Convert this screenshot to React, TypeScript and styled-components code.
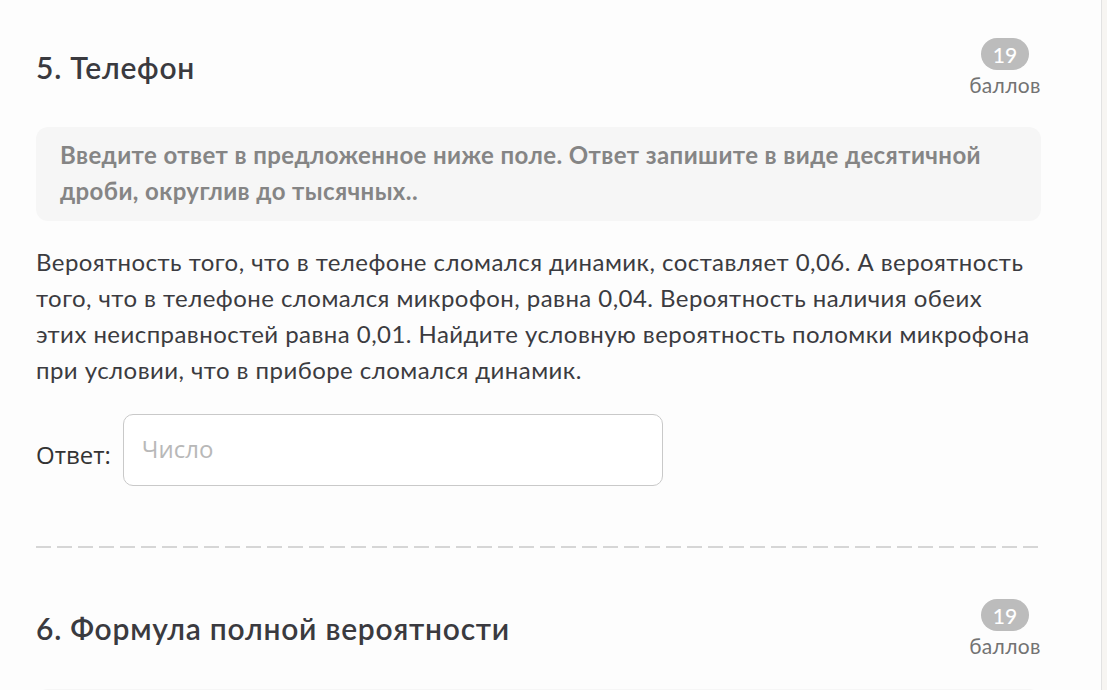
import React from "react";
import styled, { createGlobalStyle } from "styled-components";

const Global = createGlobalStyle`
  html, body { margin: 0; padding: 0; background: #fdfdfd; }
  body { font-family: Lato, "Open Sans", "Noto Sans", sans-serif; color: #3b3b40; }
  * { box-sizing: border-box; }
`;

const Shell = styled.div`
  display: flex;
  width: 1107px;
  height: 690px;
  overflow: hidden;
`;

const Main = styled.main`
  flex: 1;
  padding: 38px 60px 0 36px;
  background: #fdfdfd;
`;

const Rail = styled.div`
  width: 6px;
  border-left: 1px solid #e2e2e2;
  background: #f7f5f2;
`;

const Section = styled.section`
  display: flex;
  flex-direction: column;
`;

const Header = styled.div`
  display: flex;
  justify-content: space-between;
  align-items: center;
`;

const Title = styled.h2`
  margin: 0 0 4px;
  font-size: 30px;
  font-weight: 600;
  color: #3a3a3f;
  letter-spacing: 0.75px;
`;

const Score = styled.div`
  display: flex;
  flex-direction: column;
  align-items: center;
  width: 72px;
`;

const Badge = styled.span`
  display: inline-flex;
  align-items: center;
  justify-content: center;
  min-width: 48px;
  height: 32px;
  padding: 0 10px;
  border-radius: 16px;
  background: #bcbcbc;
  color: #fff;
  font-size: 21px;
  font-weight: 500;
`;

const Unit = styled.span`
  font-size: 21px;
  color: #737373;
  line-height: 30px;
  letter-spacing: 0.3px;
`;

const Hint = styled.div<{ $clipped?: boolean }>`
  margin-top: ${(p) => (p.$clipped ? "28px" : "27px")};
  padding: 10px 24px 12px;
  background: #f6f6f6;
  border-radius: 12px;
  color: #858585;
  font-size: 24px;
  font-weight: 700;
  line-height: 36px;
  letter-spacing: 0.4px;
`;

const Body = styled.p`
  margin: 23px 0 0;
  font-size: 24px;
  line-height: 36px;
  color: #3b3b40;
  letter-spacing: 0.45px;
  white-space: nowrap;
`;

const AnswerRow = styled.div`
  display: flex;
  align-items: center;
  gap: 12px;
  margin-top: 26px;
`;

const Label = styled.span`
  font-family: "Open Sans", "Noto Sans", sans-serif;
  font-size: 24px;
  color: #333;
  margin-top: 8px;
`;

const Input = styled.input`
  width: 540px;
  height: 72px;
  border: 1px solid #c9c9c9;
  border-radius: 10px;
  padding: 0 18px 4px;
  font-family: "Open Sans", "Noto Sans", sans-serif;
  font-size: 24px;
  color: #333;
  background: #fff;
  outline: none;
  &::placeholder { color: #b8b8b8; }
`;

const Divider = styled.hr`
  margin: 60px 0 0;
  height: 2px;
  border: 0;
  background: repeating-linear-gradient(
    to right,
    #d6d6d6 0 15px,
    transparent 15px 21px
  );
`;

const NextSection = styled(Section)`
  margin-top: 51px;
`;

export default function App() {
  return (
    <>
      <Global />
      <Shell>
        <Main>
          <Section>
            <Header>
              <Title>5. Телефон</Title>
              <Score>
                <Badge>19</Badge>
                <Unit>баллов</Unit>
              </Score>
            </Header>
            <Hint>
              Введите ответ в предложенное ниже поле. Ответ запишите в виде десятичной дроби, округлив до тысячных..
            </Hint>
            <Body>
              Вероятность того, что в телефоне сломался динамик, составляет 0,06. А вероятность
              <br />
              того, что в телефоне сломался микрофон, равна 0,04. Вероятность наличия обеих
              <br />
              этих неисправностей равна 0,01. Найдите условную вероятность поломки микрофона
              <br />
              при условии, что в приборе сломался динамик.
            </Body>
            <AnswerRow>
              <Label>Ответ:</Label>
              <Input placeholder="Число" />
            </AnswerRow>
            <Divider />
          </Section>
          <NextSection>
            <Header>
              <Title>6. Формула полной вероятности</Title>
              <Score>
                <Badge>19</Badge>
                <Unit>баллов</Unit>
              </Score>
            </Header>
            <Hint $clipped>&nbsp;</Hint>
          </NextSection>
        </Main>
        <Rail />
      </Shell>
    </>
  );
}
